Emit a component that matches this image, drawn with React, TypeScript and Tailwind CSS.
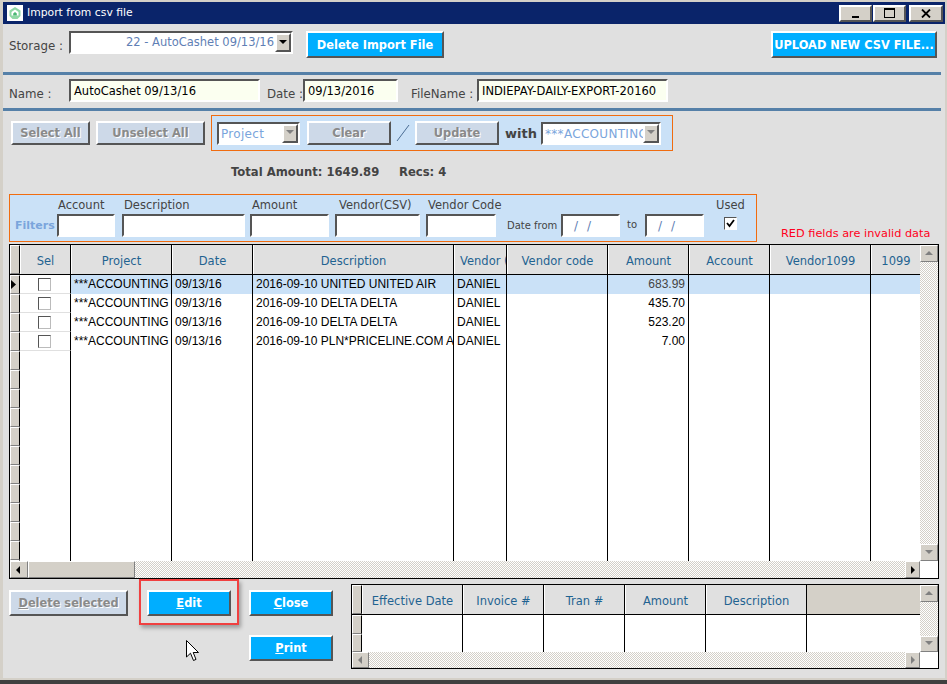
import React from "react";

const sunken = "border-2 border-t-[#555555] border-l-[#555555] border-r-white border-b-white";
const raised = "border-2 border-t-white border-l-white border-r-[#555555] border-b-[#555555]";
const dither = "bg-[conic-gradient(#d4d0c8_25%,#ffffff_0_50%,#d4d0c8_0_75%,#ffffff_0)] bg-[length:2px_2px]";
const bevel = "border border-t-white border-l-white border-r-[#808080] border-b-[#808080] bg-[#d4d0c8]";

const Arrow = ({ dir, off }: { dir: "up" | "down" | "left" | "right"; off?: boolean }) => {
  const pts = { up: "1,6 9,6 5,2", down: "1,2 9,2 5,6", left: "6,1 6,9 2,5", right: "3,1 3,9 7,5" }[dir];
  return (
    <svg width="10" height="10" viewBox="0 0 10 10">
      <polygon points={pts} fill={off ? "#808080" : "#000000"} />
    </svg>
  );
};

const SBtn = ({ dir, off, className }: { dir: "up" | "down" | "left" | "right"; off?: boolean; className: string }) => (
  <div className={`flex shrink-0 items-center justify-center ${bevel} ${className}`}>
    <Arrow dir={dir} off={off} />
  </div>
);

const Combo = ({ text, width }: { text: string; width: string }) => (
  <div className={`flex h-[23px] shrink-0 items-center overflow-hidden bg-white ${sunken} ${width}`}>
    <div className="flex-1 overflow-hidden whitespace-nowrap pl-[2px] pt-[1px] text-[12px] tracking-[0.3px] text-[#7aa5dc]">{text}</div>
    <div className={`flex h-[19px] w-[16px] shrink-0 items-center justify-center ${raised} bg-[#d4d0c8]`}>
      <Arrow dir="down" off />
    </div>
  </div>
);

const Btn = ({ label, first, width, off, height = "h-[26px]" }: { label: string; first?: string; width: string; off?: boolean; height?: string }) => (
  <div
    className={`flex shrink-0 items-center justify-center pt-[2px] text-[11.4px] font-bold ${raised} ${height} ${width} ${
      off ? "bg-[#cdd9e8] text-[#8a8a8a] [text-shadow:1px_1px_0_#ffffff]" : "bg-[#00aeff] text-white"
    }`}
  >
    {first && <span className="underline">{first}</span>}
    {label}
  </div>
);

const Input = ({ text, width }: { text: string; width: string }) => (
  <div className={`flex h-[23px] shrink-0 items-center overflow-hidden whitespace-nowrap bg-[#fbfff0] pl-[3px] pt-[2px] text-[11.5px] text-black ${sunken} ${width}`}>
    {text}
  </div>
);

const Field = ({ label, width, labelClass }: { label: string; width: string; labelClass: string }) => (
  <div className={`flex shrink-0 flex-col ${width}`}>
    <div className={`h-[14px] whitespace-nowrap text-[11.5px] leading-[14px] text-[#444444] ${labelClass}`}>{label}</div>
    <div className={`mt-[2px] h-[23px] w-full bg-white ${sunken}`} />
  </div>
);

const DateBox = () => (
  <div className={`flex h-[23px] w-[59px] shrink-0 items-center bg-white pl-[11px] text-[12px] tracking-[9px] text-[#5f7fb5] ${sunken}`}>
    //
  </div>
);

const columns = [
  { title: "Sel", w: "w-[51px]", align: "justify-center" },
  { title: "Project", w: "w-[101px]", align: "justify-center" },
  { title: "Date", w: "w-[81px]", align: "justify-center" },
  { title: "Description", w: "w-[201px]", align: "justify-center" },
  { title: "Vendor (", w: "w-[53px]", align: "justify-start pl-[5px]" },
  { title: "Vendor code", w: "w-[101px]", align: "justify-center" },
  { title: "Amount", w: "w-[81px]", align: "justify-center" },
  { title: "Account", w: "w-[81px]", align: "justify-center" },
  { title: "Vendor1099", w: "w-[101px]", align: "justify-center" },
  { title: "1099", w: "w-[50px]", align: "justify-center" },
];

const rows = [
  { desc: "2016-09-10 UNITED UNITED AIR", amount: "683.99" },
  { desc: "2016-09-10 DELTA DELTA", amount: "435.70" },
  { desc: "2016-09-10 DELTA DELTA", amount: "523.20" },
  { desc: "2016-09-10 PLN*PRICELINE.COM A", amount: "7.00" },
];

const Cell = ({ w, children, className = "" }: { w: string; children?: React.ReactNode; className?: string }) => (
  <div className={`h-full shrink-0 overflow-hidden whitespace-nowrap border-r border-black pl-[3px] ${w} ${className}`}>{children}</div>
);

const lowerCols = [
  { title: "Effective Date", w: "w-[101px]" },
  { title: "Invoice #", w: "w-[81px]" },
  { title: "Tran #", w: "w-[81px]" },
  { title: "Amount", w: "w-[81px]" },
  { title: "Description", w: "w-[101px]" },
];

export default function App() {
  return (
    <div className="relative flex h-[684px] w-[947px] flex-col overflow-hidden bg-[#d4d0c8] pt-[2px] font-['Tahoma','DejaVu_Sans',sans-serif]">
      <div className="ml-[3px] mr-[2px] flex h-[22px] shrink-0 items-center bg-[#0a246a]">
        <div className="ml-[4px] flex h-[16px] w-[16px] items-center justify-center bg-white">
          <svg width="14" height="14" viewBox="0 0 14 14">
            <path d="M7 1 L12.5 4.5 V10 L9.5 13 H4.5 L1.5 10 V4.5 Z" fill="#8ed8a4" />
            <path d="M7 3.5 L10.5 6 V9.5 H3.5 V6 Z" fill="#ffffff" />
            <path d="M7 6 L8.8 7.4 V9.5 H5.2 V7.4 Z" fill="#4cb874" />
          </svg>
        </div>
        <div className="ml-[4px] pt-[1px] text-[10.8px] text-white">Import from csv file</div>
        <div className="ml-auto mr-[2px] flex items-center gap-[1px]">
          <div className={`flex h-[17px] w-[33px] items-end justify-center pb-[2px] ${raised} bg-[#d4d0c8]`}>
            <div className="h-[2px] w-[7px] bg-black" />
          </div>
          <div className={`flex h-[17px] w-[33px] items-center justify-center ${raised} bg-[#d4d0c8]`}>
            <div className="h-[10px] w-[11px] border border-t-2 border-black" />
          </div>
          <div className={`ml-[2px] flex h-[17px] w-[34px] items-center justify-center ${raised} bg-[#d4d0c8]`}>
            <svg width="10" height="9" viewBox="0 0 10 9">
              <path d="M1 0.5 L9 8.5 M9 0.5 L1 8.5" stroke="#000000" strokeWidth="1.8" />
            </svg>
          </div>
        </div>
      </div>

      <div className="ml-[3px] mr-[2px] flex min-h-0 flex-1 flex-col bg-[#e0e0e0]">
        <div className="ml-[6px] mt-[7px] flex h-[27px] shrink-0 items-start">
          <div className="w-[60px] pt-[7px] text-[11.8px] text-[#444444]">Storage :</div>
          <div className={`flex h-[23px] w-[224px] shrink-0 items-center bg-white ${sunken}`}>
            <div className="flex-1 overflow-hidden whitespace-nowrap pr-[1px] text-right text-[11.5px] text-[#5f7fb5]">22 - AutoCashet 09/13/16</div>
            <div className={`flex h-[19px] w-[16px] shrink-0 items-center justify-center ${raised} bg-[#d4d0c8]`}>
              <Arrow dir="down" />
            </div>
          </div>
          <div className="ml-[13px]">
            <Btn label="Delete Import File" width="w-[138px]" height="h-[27px]" />
          </div>
          <div className="ml-auto mr-[8px]">
            <Btn label="UPLOAD NEW CSV FILE..." width="w-[166px]" height="h-[27px]" />
          </div>
        </div>

        <div className="mr-[4px] mt-[14px] h-[3px] shrink-0 bg-[#5580a8]" />

        <div className="ml-[6px] mt-[4px] flex h-[23px] shrink-0 items-center">
          <div className="w-[60px] pt-[8px] text-[11.8px] text-[#444444]">Name :</div>
          <Input text="AutoCashet 09/13/16" width="w-[191px]" />
          <div className="ml-[7px] w-[36px] whitespace-nowrap pt-[8px] text-[11.8px] text-[#444444]">Date :</div>
          <Input text="09/13/2016" width="w-[95px]" />
          <div className="ml-[13px] w-[66px] whitespace-nowrap pt-[8px] text-[11.8px] text-[#444444]">FileName :</div>
          <Input text="INDIEPAY-DAILY-EXPORT-20160" width="w-[191px]" />
        </div>

        <div className="mr-[4px] mt-[6px] h-[3px] shrink-0 bg-[#5580a8]" />

        <div className="ml-[8px] mt-[4px] flex h-[36px] shrink-0 items-center">
          <Btn label="Select All" width="w-[79px]" off height="h-[24px]" />
          <div className="ml-[6px]">
            <Btn label="Unselect All" width="w-[109px]" off height="h-[24px]" />
          </div>
          <div className="ml-[6px] flex h-[36px] w-[462px] shrink-0 items-center border border-[#f06c10] bg-[#cae1f7] pl-[5px]">
            <Combo text="Project" width="w-[83px]" />
            <div className="ml-[7px]">
              <Btn label="Clear" width="w-[84px]" off height="h-[24px]" />
            </div>
            <div className="flex w-[24px] shrink-0 justify-center">
              <svg width="14" height="18" viewBox="0 0 14 18">
                <path d="M1 17 L13 1" stroke="#4a6d94" strokeWidth="1" />
              </svg>
            </div>
            <Btn label="Update" width="w-[84px]" off height="h-[24px]" />
            <div className="ml-[6px] w-[36px] pt-[1px] text-[13px] font-bold text-[#444444]">with</div>
            <Combo text="***ACCOUNTING" width="w-[120px]" />
          </div>
        </div>

        <div className="ml-[228px] mt-[12px] flex h-[18px] shrink-0 items-center pt-[2px] text-[11.6px] font-bold text-[#444444]">
          <div className="w-[168px]">Total Amount: 1649.89</div>
          <div>Recs: 4</div>
        </div>

        <div className="ml-[6px] mt-[13px] flex h-[48px] shrink-0 items-end">
          <div className="flex h-[48px] w-[748px] shrink-0 items-end border border-[#f06c10] bg-[#cae1f7] pb-[4px] pl-[5px]">
            <div className="mb-[3px] w-[42px] text-[11px] font-bold text-[#7aa5dc]">Filters</div>
            <Field label="Account" width="w-[58px]" labelClass="pl-[1px]" />
            <div className="ml-[7px]"><Field label="Description" width="w-[123px]" labelClass="pl-[2px]" /></div>
            <div className="ml-[5px]"><Field label="Amount" width="w-[79px]" labelClass="pl-[2px]" /></div>
            <div className="ml-[6px]"><Field label="Vendor(CSV)" width="w-[85px]" labelClass="pl-[4px]" /></div>
            <div className="ml-[6px]"><Field label="Vendor Code" width="w-[70px]" labelClass="pl-[2px]" /></div>
            <div className="mb-[4px] ml-[11px] w-[54px] whitespace-nowrap text-[10px] text-[#444444]">Date from</div>
            <DateBox />
            <div className="mb-[5px] w-[25px] pl-[7px] text-[10px] text-[#444444]">to</div>
            <DateBox />
            <div className="ml-[12px] flex h-[39px] flex-col self-end">
              <div className="text-[11.5px] leading-[14px] text-[#444444]">Used</div>
              <div className="ml-[8px] mt-[5px] flex h-[13px] w-[13px] items-center justify-center border border-t-[#555555] border-l-[#555555] border-r-white border-b-white bg-white">
                <svg width="9" height="9" viewBox="0 0 9 9">
                  <path d="M1 4 L3.5 7 L8 1" fill="none" stroke="#000000" strokeWidth="1.8" />
                </svg>
              </div>
            </div>
          </div>
          <div className="-mb-px ml-[24px] whitespace-nowrap text-[11.3px] text-[#ff0020]">RED fields are invalid data</div>
        </div>

        <div className="ml-[6px] mt-[2px] flex h-[335px] w-[930px] shrink-0 flex-col border border-black">
          <div className="flex h-[316px] shrink-0">
            <div className="flex w-[910px] shrink-0 flex-col">
              <div className="flex h-[30px] shrink-0 border-b border-black">
                <div className={`h-full w-[10px] shrink-0 border-r-black ${bevel}`} />
                {columns.map((c) => (
                  <div
                    key={c.title}
                    className={`flex h-full shrink-0 items-center overflow-hidden whitespace-nowrap border-l border-r border-l-white border-r-black bg-[#e0e0e0] pt-[4px] text-[11.5px] text-[#1f6391] ${c.align} ${c.w}`}
                  >
                    {c.title}
                  </div>
                ))}
              </div>
              <div className="flex h-[286px] shrink-0 flex-col overflow-hidden bg-white font-['Liberation_Sans',sans-serif] text-[12px] leading-[19px] text-black">
                {Array.from({ length: 16 }).map((_, i) => {
                  const r = rows[i];
                  return (
                    <div key={i} className={`flex h-[19px] shrink-0 ${i === 0 ? "bg-[#cae1f7]" : ""}`}>
                      <div className={`flex h-full w-[10px] shrink-0 items-center border-r-black ${bevel}`}>
                        {i === 0 && (
                          <svg width="6" height="9" viewBox="0 0 6 9">
                            <path d="M0 0 L5 4.5 L0 9 Z" fill="#000000" />
                          </svg>
                        )}
                      </div>
                      <Cell w="w-[51px]" className={`flex items-center justify-center !pl-0 pr-[2px] bg-white ${r ? "border-b border-b-[#e0e0e0]" : ""}`}>
                        {r && <div className="h-[13px] w-[13px] border border-t-[#555555] border-l-[#555555] border-r-[#bbbbbb] border-b-[#bbbbbb] bg-white" />}
                      </Cell>
                      <Cell w="w-[101px]">{r && "***ACCOUNTING"}</Cell>
                      <Cell w="w-[81px]">{r && "09/13/16"}</Cell>
                      <Cell w="w-[201px]">{r && r.desc}</Cell>
                      <Cell w="w-[53px]">{r && "DANIEL"}</Cell>
                      <Cell w="w-[101px]" />
                      <Cell w="w-[81px]" className={`pr-[3px] text-right ${i === 0 ? "text-[#444444]" : ""}`}>{r && r.amount}</Cell>
                      <Cell w="w-[81px]" />
                      <Cell w="w-[101px]" />
                      <Cell w="w-[50px]" className="border-r-0" />
                    </div>
                  );
                })}
              </div>
            </div>
            <div className={`flex w-[18px] shrink-0 flex-col justify-between ${dither}`}>
              <SBtn dir="up" off className="h-[17px] w-[18px]" />
              <SBtn dir="down" off className="h-[17px] w-[18px]" />
            </div>
          </div>
          <div className="flex h-[17px] shrink-0">
            <SBtn dir="left" className="h-full w-[18px]" />
            <div className={`h-full w-[107px] shrink-0 ${bevel}`} />
            <div className={`h-full flex-1 ${dither}`} />
            <SBtn dir="right" className="h-full w-[15px]" />
            <div className="h-full w-[18px] shrink-0 bg-white" />
          </div>
        </div>

        <div className="flex shrink-0 items-start">
          <div className="ml-[6px] mt-[11px]">
            <Btn first="D" label="elete selected" width="w-[119px]" off />
          </div>
          <div className="ml-[11px] h-[46px] w-[100px] shrink-0 border-2 border-[#f04040] px-[6px] pt-[9px] shadow-[2px_3px_4px_rgba(0,0,0,0.3)]">
            <Btn first="E" label="dit" width="w-[84px]" />
          </div>
          <div className="ml-[10px] mt-[11px] flex flex-col gap-[19px]">
            <Btn first="C" label="lose" width="w-[84px]" />
            <Btn first="P" label="rint" width="w-[84px]" />
          </div>
          <div className="ml-[18px] mt-[5px] flex h-[85px] w-[588px] shrink-0 flex-col border border-black">
            <div className="flex h-[67px] shrink-0">
              <div className="flex w-[568px] shrink-0 flex-col">
                <div className="flex h-[30px] shrink-0 border-b border-black">
                  <div className={`h-full w-[10px] shrink-0 border-r-black ${bevel}`} />
                  {lowerCols.map((c) => (
                    <div
                      key={c.title}
                      className={`flex h-full shrink-0 items-center justify-center whitespace-nowrap border-l border-r border-l-white border-r-black bg-[#e0e0e0] pt-[4px] text-[11.5px] text-[#1f6391] ${c.w}`}
                    >
                      {c.title}
                    </div>
                  ))}
                  <div className="h-full flex-1 bg-[#d4d0c8]" />
                </div>
                <div className="flex h-[37px] shrink-0 bg-white">
                  <div className="flex w-[10px] shrink-0 flex-col">
                    <div className={`h-[19px] border-r-black ${bevel}`} />
                    <div className={`h-[18px] border-r-black ${bevel}`} />
                  </div>
                  {lowerCols.map((c) => (
                    <Cell key={c.title} w={c.w} />
                  ))}
                </div>
              </div>
              <div className={`flex w-[18px] shrink-0 flex-col justify-between ${dither}`}>
                <SBtn dir="up" off className="h-[17px] w-[18px]" />
                <SBtn dir="down" off className="h-[16px] w-[18px]" />
              </div>
            </div>
            <div className="flex h-[16px] shrink-0">
              <SBtn dir="left" off className="h-full w-[17px]" />
              <div className={`h-full flex-1 ${dither}`} />
              <SBtn dir="right" off className="h-full w-[15px]" />
              <div className="h-full w-[18px] shrink-0 bg-white" />
            </div>
          </div>
        </div>
      </div>
      <div className="mt-[2px] h-[4px] shrink-0 bg-[#404040]" />

      <svg className="absolute left-[186px] top-[640px]" width="14" height="22" viewBox="0 0 14 22">
        <path d="M0.5 0.5 V17 L4.5 13.2 L7.5 20.5 L10 19.4 L7.2 12.5 H12.5 Z" fill="#ffffff" stroke="#000000" strokeWidth="1" />
      </svg>
    </div>
  );
}
